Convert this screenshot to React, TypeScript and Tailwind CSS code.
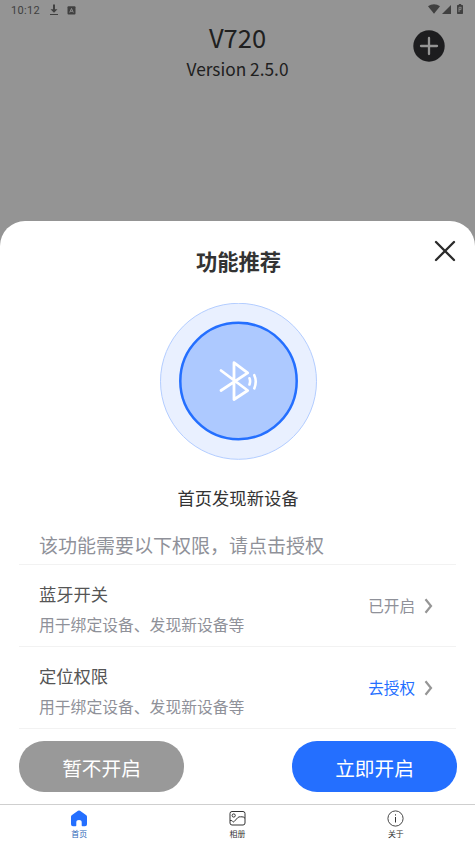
import React from "react";

interface PermissionItem {
  title: string;
  description: string;
  status: string;
  granted: boolean;
}

const permissions: PermissionItem[] = [
  {
    title: "蓝牙开关",
    description: "用于绑定设备、发现新设备等",
    status: "已开启",
    granted: true,
  },
  {
    title: "定位权限",
    description: "用于绑定设备、发现新设备等",
    status: "去授权",
    granted: false,
  },
];

const StatusBar: React.FC = () => (
  <div className="flex h-5 items-center justify-between pl-[11px] pr-[12px] text-[#404040]">
    <div className="flex items-center">
      <span className="w-[39px] pt-px font-['Roboto',sans-serif] text-[11px] leading-5 tracking-[0.3px]">
        10:12
      </span>
      <svg className="h-3 w-2" viewBox="0 0 8 12" fill="currentColor">
        <path d="M3 .5h2v4.800h2.500L4 8.800.5 5.300H3zM0 10h8v1.100H0z" />
      </svg>
      <svg className="ml-[9px] h-[9px] w-[9px]" viewBox="0 0 9 9">
        <rect x=".5" y=".3" width="8" height="8.300" rx="1" fill="currentColor" />
        <path
          d="M2.700 6.500 4.500 2.500l1.800 4M3.400 5.300h2.200"
          fill="none"
          stroke="#949494"
          strokeWidth="0.9"
        />
      </svg>
    </div>
    <div className="flex items-center pb-[2px]">
      <svg className="h-[10px] w-3" viewBox="0 0 12 10" fill="currentColor">
        <path d="M0 2.300C3.500-.6 8.500-.6 12 2.300L6 9.700z" />
      </svg>
      <svg className="ml-[2px] h-[9px] w-[9px]" viewBox="0 0 9 9" fill="currentColor">
        <path d="M9 0v9H0z" />
      </svg>
      <svg className="ml-[6px] h-[10px] w-[6px]" viewBox="0 0 6 10">
        <path
          d="M1.8 0h2.4v1H5.3q.7 0 .7.7v7.6q0 .7-.7.7H.7Q0 10 0 9.3V1.700Q0 1 .7 1h1.100z"
          fill="currentColor"
        />
        <path d="M2 8V3.300h2.300M2 5.600h2V3.300" fill="none" stroke="#949494" strokeWidth="0.8" />
      </svg>
    </div>
  </div>
);

const BluetoothBadge: React.FC = () => (
  <svg className="h-[157px] w-[157px]" viewBox="0 0 157 157" fill="none">
    <circle cx="78.500" cy="78.300" r="78" fill="#e9f0ff" stroke="#b3cdff" />
    <circle
      cx="78.500"
      cy="78"
      r="58.200"
      fill="#adc9ff"
      stroke="#246fff"
      strokeWidth="2.500"
    />
    <g
      stroke="white"
      strokeWidth="2.800"
      strokeLinecap="round"
      strokeLinejoin="round"
    >
      <path d="M61 67.500 87.700 87.500 74 96.500V59.700L87.700 69.800 61 87.500" />
      <path
        d="M89.500 75.300q1.200 3 0 6.200M94.300 72.200q2.900 6.200 0 13.200"
        strokeWidth="2.600"
      />
    </g>
  </svg>
);

const PermissionRow: React.FC<{ item: PermissionItem }> = ({ item }) => (
  <div className="mx-[19px] flex h-[82.200px] items-center justify-between border-b border-[#f2f2f2] pl-5 pr-[23px]">
    <div className="pt-[6px]">
      <p className="text-[17.300px] leading-[31px] text-[#555555]">{item.title}</p>
      <p className="text-[15.800px] leading-[31px] text-[#8f9199]">
        {item.description}
      </p>
    </div>
    <div className="flex items-center gap-[9px]">
      <span
        className={
          item.granted
            ? "-mt-px text-[15.600px] leading-6 text-[#8f9199]"
            : "-mt-px text-[15.600px] leading-6 text-[#246fff]"
        }
      >
        {item.status}
      </span>
      <svg className="h-4 w-[9px]" viewBox="0 0 9 16" fill="none">
        <path d="M1.500 1.200 7 8l-5.500 6.800" stroke="#969696" strokeWidth="2.200" />
      </svg>
    </div>
  </div>
);

const TabBar: React.FC = () => (
  <nav className="flex h-10 border-t border-[#cfcfcf] bg-white text-[7.900px] leading-3 text-[#333333]">
    <div className="flex flex-1 flex-col items-center pt-[5px] text-[#2a66b8]">
      <svg className="h-[17px] w-4" viewBox="0 0 16 17" fill="#246fff">
        <path d="M7 .8q1-.6 2 0l6 4.200q1 .7 1 1.800v7.400q0 2-2 2h-2.500q-.8 0-.8-.8v-3q0-2.400-2.700-2.400t-2.700 2.400v3q0 .8-.8.8H2q-2 0-2-2V6.800Q0 5.700 1 5z" />
      </svg>
      <span className="mt-[1px]">首页</span>
    </div>
    <div className="flex flex-1 flex-col items-center pt-[5px]">
      <svg
        className="h-[17px] w-[17px]"
        viewBox="0 0 17 17"
        fill="none"
        stroke="#333333"
        strokeWidth="1"
      >
        <rect x="1" y="1.500" width="15" height="13.500" rx="2" />
        <circle cx="4.700" cy="5.500" r="1.600" />
        <path d="M1 10.500h1.200q1 0 1.500 1t1.500 0l3.500-3.800q1.200-1.200 2.800-.9h1.500q2 0 3 1.500" />
      </svg>
      <span className="mt-[1px]">相册</span>
    </div>
    <div className="flex flex-1 flex-col items-center pt-[5px]">
      <svg className="h-[17px] w-[17px]" viewBox="0 0 17 17" fill="none" stroke="#333333">
        <circle cx="8.500" cy="8.500" r="7.600" strokeWidth="0.9" />
        <path d="M8.500 7v5.500M8.500 4.300v1.200" />
      </svg>
      <span className="mt-[1px]">关于</span>
    </div>
  </nav>
);

const App: React.FC = () => {
  return (
    <div className="flex h-[844px] w-[475px] flex-col overflow-hidden bg-[#949494] font-['Noto_Sans_CJK_SC',sans-serif]">
      <StatusBar />

      <header className="flex h-[200.500px] justify-between px-[30px]">
        <div className="w-8" />
        <div className="text-center text-[#202020]">
          <h1 className="text-[25.500px] leading-[34px]">V720</h1>
          <p className="text-[17.300px] leading-[30px]">Version 2.5.0</p>
        </div>
        <button type="button" className="mt-[10px] h-8 w-8">
          <svg className="h-8 w-8" viewBox="0 0 32 32">
            <circle cx="16" cy="16" r="15.700" fill="#1d1d1f" />
            <path
              d="M8 16h16M16 8v16"
              stroke="#949494"
              strokeWidth="2.300"
              strokeLinecap="round"
            />
          </svg>
        </button>
      </header>

      <main className="flex flex-1 flex-col rounded-t-[25px] bg-white">
        <div className="flex h-[82.500px] justify-between pl-[21px] pr-[19px]">
          <div className="w-[22px]" />
          <h2 className="mt-[24.500px] text-[21.300px] font-bold leading-8 text-[#333333]">
            功能推荐
          </h2>
          <button type="button" className="mt-[19.500px] h-[22px] w-[22px]">
            <svg className="h-[22px] w-[22px]" viewBox="0 0 22 22">
              <path
                d="M2 2l18 18M20 2 2 20"
                stroke="#2b2b2b"
                strokeWidth="2.300"
                strokeLinecap="round"
              />
            </svg>
          </button>
        </div>

        <div className="flex justify-center pl-[2px]">
          <BluetoothBadge />
        </div>
        <p className="mt-[24px] pl-px text-center text-[17.300px] leading-7 text-[#333333]">
          首页发现新设备
        </p>

        <p className="mx-[19px] mt-[17px] h-[36px] border-b border-[#f2f2f2] pl-5 text-[19px] leading-8 text-[#8f9199]">
          该功能需要以下权限，请点击授权
        </p>
        {permissions.map((item) => (
          <PermissionRow key={item.title} item={item} />
        ))}

        <div className="mt-[12px] flex justify-between pl-[19px] pr-[18px] text-[19.700px] text-white">
          <button type="button" className="h-[51px] w-[165px] rounded-[25px] bg-[#999999] pt-px">
            暂不开启
          </button>
          <button type="button" className="h-[51px] w-[165px] rounded-[25px] bg-[#246fff] pt-px">
            立即开启
          </button>
        </div>
      </main>

      <TabBar />
    </div>
  );
};

export default App;
